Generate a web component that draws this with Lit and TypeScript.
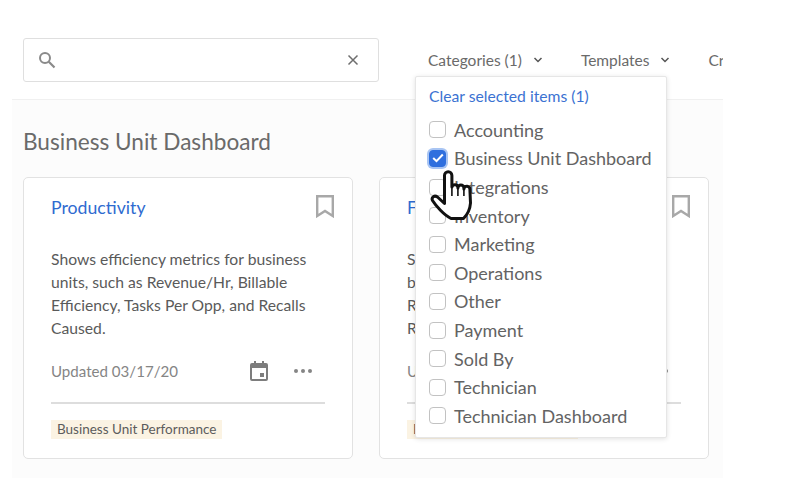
import { LitElement, html, css } from "lit";
import { customElement } from "lit/decorators.js";

const items = ["Accounting","Business Unit Dashboard","Integrations","Inventory","Marketing","Operations","Other","Payment","Sold By","Technician","Technician Dashboard"];

const chev = html`<svg class="chev" viewBox="0 0 10 6" width="10" height="6"><path d="M1.5 1 L5 4.5 L8.5 1" fill="none" stroke="#555" stroke-width="1.5"/></svg>`;

const bookmark = html`<svg class="bm" viewBox="0 0 18 23" width="18" height="23"><path d="M1.2 1.2 H16.8 V21 L9 16 L1.2 21 Z" fill="none" stroke="#a8a8a8" stroke-width="2.4"/></svg>`;

const card = (title: string, lines: string[]) => html`
  <article class="card">
    <div class="top"><a class="ttl">${title}</a>${bookmark}</div>
    <div class="desc">${lines.map((l) => html`<div>${l}</div>`)}</div>
    <div class="meta">
      <span class="upd">Updated 03/17/20</span>
      <svg class="cal" viewBox="0 0 18 20" width="18" height="20"><path fill="#7d7d7d" d="M4 0h2v2h6V0h2v2h2a2 2 0 0 1 2 2v14a2 2 0 0 1-2 2H2a2 2 0 0 1-2-2V4a2 2 0 0 1 2-2h2zM2 7v11h14V7zm8 5h4v4h-4z" fill-rule="evenodd"/></svg>
      <svg class="dots" viewBox="0 0 18 4" width="18" height="4"><circle cx="2" cy="2" r="2" fill="#858585"/><circle cx="9" cy="2" r="2" fill="#858585"/><circle cx="16" cy="2" r="2" fill="#858585"/></svg>
    </div>
    <div class="tagrow"><span class="tag">Business Unit Performance</span></div>
  </article>`;

@customElement("app-root")
export class AppRoot extends LitElement {
  static styles = css`
    :host { display: block; width: 805px; height: 487px; background: #fff; position: relative; overflow: hidden; font-family: "Lato", "Noto Sans", sans-serif; color: #5c5c5c; }
    * { box-sizing: border-box; }
    .panel { width: 711px; margin-left: 12px; overflow: hidden; }
    header { height: 100px; border-bottom: 1px solid #f0f0f0; padding: 38px 0 0 11px; display: flex; align-items: flex-start; background: #fff; }
    .search { width: 356px; height: 44px; border: 1px solid #dfdfdf; border-radius: 3px; display: flex; align-items: center; justify-content: space-between; padding: 0 19px 0 14px; flex: none; }
    nav { display: flex; margin-left: 49px; gap: 38px; height: 44px; align-items: center; white-space: nowrap; font-size: 15.5px; color: #6a6a6a; }
    nav span { display: inline-flex; align-items: center; gap: 11px; }
    .chev { flex: none; }
    main { background: #fcfcfc; height: 378px; padding: 28px 0 0 11px; }
    h1 { margin: 0 0 21px; font-size: 22.6px; font-weight: 400; line-height: 28px; color: #6a6a6a; }
    .cards { display: flex; gap: 26px; }
    .card { width: 330px; height: 282px; flex: none; background: #fff; border: 1px solid #e2e2e2; border-radius: 5px; padding: 17px 27px 0; }
    .top { display: flex; justify-content: space-between; height: 30px; align-items: flex-start; }
    .ttl { color: #2f6bd0; font-size: 17.7px; line-height: 26px; }
    .bm { margin: 0 -9px 0 0; }
    .desc { margin: 23px 0 0; font-size: 15.7px; line-height: 23px; color: #5a5a5a; height: 93px; white-space: nowrap; }
    .meta { display: flex; align-items: center; height: 30px; margin-top: 15px; }
    .upd { font-size: 15.1px; color: #858585; flex: 1; }
    .cal { margin-right: 26px; }
    .dots { margin-right: 13px; }
    .tagrow { margin-top: 16px; border-top: 2px solid #dddddd; padding-top: 16px; display: flex; }
    .tag { background: #fbf3e3; color: #5c5c5c; font-size: 13.5px; line-height: 19px; padding: 0 6px; }
    .menu { position: absolute; left: 415px; top: 76px; width: 252px; height: 362px; background: #fff; border: 1px solid #e6e6e6; box-shadow: 0 1px 5px rgba(0,0,0,.12); padding: 8px 13px; border-radius: 2px; }
    .clear { color: #3b72d2; font-size: 15.7px; line-height: 22px; margin-bottom: 8.6px; }
    .item { display: flex; align-items: center; gap: 8px; height: 28.6px; font-size: 18px; color: #636363; white-space: nowrap; }
    .box { width: 17px; height: 17px; border: 1px solid #c2c2c2; border-radius: 4px; flex: none; background: #fff; display: flex; align-items: center; justify-content: center; }
    .box.on { background: #2f6fde; border-color: #2f6fde; box-shadow: 0 0 0 2px #a9c5f3; }
    .hand { position: absolute; left: 430px; top: 170px; }
  `;
  render() {
    return html`
      <div class="panel">
        <header>
          <div class="search">
            <svg viewBox="0 0 18 18" width="18" height="18"><circle cx="7" cy="7" r="5" fill="none" stroke="#8a8a8a" stroke-width="2"/><path d="M10.8 10.8 L16.5 16.5" stroke="#8a8a8a" stroke-width="2.2"/></svg>
            <svg viewBox="0 0 12 12" width="12" height="12"><path d="M1.5 1.5 L10.5 10.5 M10.5 1.5 L1.5 10.5" stroke="#6e6e6e" stroke-width="1.5"/></svg>
          </div>
          <nav><span>Categories (1) ${chev}</span><span>Templates ${chev}</span><span>Created By</span></nav>
        </header>
        <main>
          <h1>Business Unit Dashboard</h1>
          <div class="cards">
            ${card("Productivity", ["Shows efficiency metrics for business", "units, such as Revenue/Hr, Billable", "Efficiency, Tasks Per Opp, and Recalls", "Caused."])}
            ${card("Financial", ["Shows financial metrics for", "business units, such as", "Revenue, Gross Margin,", "Recalls and Refunds."])}
          </div>
        </main>
      </div>
      <div class="menu">
        <div class="clear">Clear selected items (1)</div>
        ${items.map((t, i) => html`<div class="item"><span class="box ${i === 1 ? "on" : ""}">${i === 1 ? html`<svg viewBox="0 0 12 10" width="12" height="10"><path d="M1.2 5 L4.5 8.2 L10.8 1.5" fill="none" stroke="#fff" stroke-width="2"/></svg>` : ""}</span>${t}</div>`)}
      </div>
      <svg class="hand" viewBox="0 0 44 54" width="44" height="54">
        <path d="M14.5 29 V5.5 a3.7 3.7 0 0 1 7.4 0 V17 a3.1 3.1 0 0 1 6 0 V18 a3 3 0 0 1 6 0 V19 a3 3 0 0 1 6 0.5 L40.5 33 C40 40 37 45 33.5 48.5 H21 C14 45 6 36 2.5 30.5 C1 27 4.5 25 7.5 27 L14.5 33.5 Z" fill="#fff" stroke="#111" stroke-width="3" stroke-linejoin="round"/>
        <path d="M21.9 17 V26 M27.9 18 V26 M33.9 19 V26" fill="none" stroke="#111" stroke-width="1.6"/>
      </svg>
    `;
  }
}
